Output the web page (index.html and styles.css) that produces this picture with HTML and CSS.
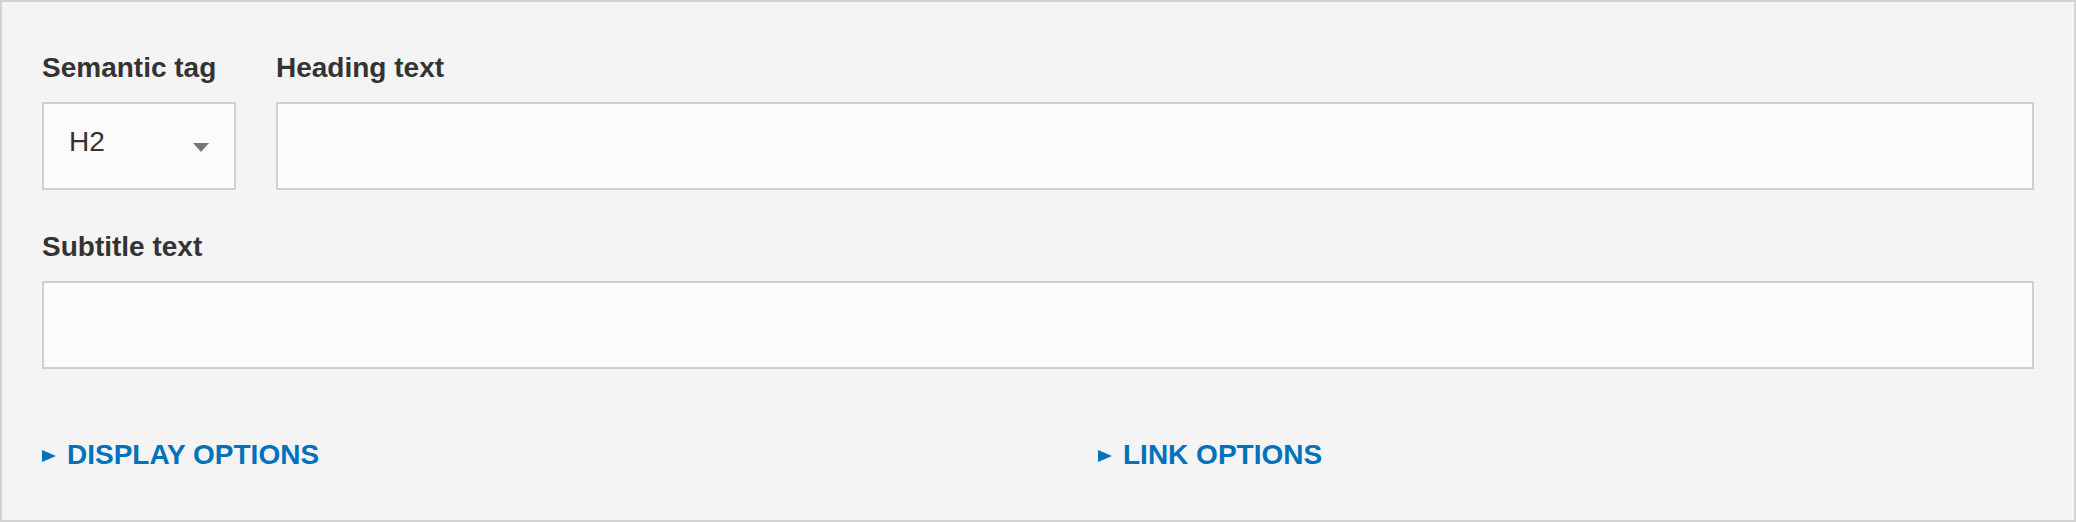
FILE: index.html
```html
<!DOCTYPE html>
<html>
<head>
<meta charset="utf-8">
<link rel="stylesheet" href="styles.css">
</head>
<body>
<div class="panel">
  <div class="row">
    <div class="field field-tag">
      <label class="label">Semantic tag</label>
      <div class="select">
        <span class="select-value">H2</span>
        <span class="caret"></span>
      </div>
    </div>
    <div class="field field-grow">
      <label class="label">Heading text</label>
      <div class="input"></div>
    </div>
  </div>
  <div class="field field-sub">
    <label class="label">Subtitle text</label>
    <div class="input"></div>
  </div>
  <div class="options">
    <a class="toggle"><span class="tri"></span>DISPLAY OPTIONS</a>
    <a class="toggle"><span class="tri"></span>LINK OPTIONS</a>
  </div>
</div>
</body>
</html>
```
FILE: styles.css
```css
* { box-sizing: border-box; }
html, body { margin: 0; padding: 0; background: #f4f4f4; }
body { font-family: "Liberation Sans", Arial, sans-serif; color: #333; }

.panel {
  width: 2076px;
  height: 522px;
  border: 2px solid #d2d2d2;
  background: #f4f4f4;
  padding: 50px 40px 0 40px;
}

.row {
  display: flex;
  gap: 40px;
}

.field { display: flex; flex-direction: column; }
.field-tag { width: 194px; flex: none; }
.field-grow { flex: 1; }
.field-sub { margin-top: 41px; }

.label {
  font-size: 28px;
  font-weight: bold;
  line-height: 32px;
  color: #333;
  margin-bottom: 18px;
}

.input, .select {
  height: 88px;
  border: 2px solid #cfcfcf;
  background: #fbfbf9;
}

.select {
  display: flex;
  align-items: center;
  padding: 0 25px 0 25px;
  justify-content: space-between;
}
.select-value {
  font-size: 28px;
  line-height: 32px;
  color: #333;
  margin-top: -9px;
}
.caret {
  width: 0; height: 0;
  border-left: 8px solid transparent;
  border-right: 8px solid transparent;
  border-top: 9px solid #777;
  margin-top: 3px;
}

.options {
  display: grid;
  grid-template-columns: 1fr 1fr;
  column-gap: 120px;
  margin-top: 70px;
}
.toggle {
  display: flex;
  align-items: center;
  font-size: 28px;
  font-weight: bold;
  line-height: 32px;
  color: #0071bb;
  text-decoration: none;
}
.tri {
  width: 0; height: 0;
  border-top: 6px solid transparent;
  border-bottom: 6px solid transparent;
  border-left: 14px solid #0071bb;
  margin-right: 11px;
  margin-top: 2px;
}
```
